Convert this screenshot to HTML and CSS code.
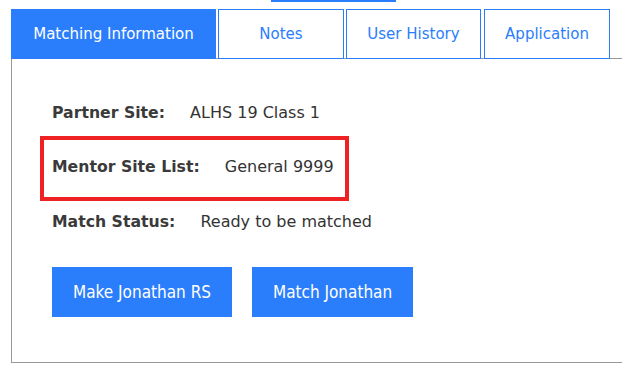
FILE: index.html
```html
<!DOCTYPE html>
<html lang="en">
<head>
    <meta charset="UTF-8">
    <meta name="viewport" content="width=device-width, initial-scale=1.0">
    <title>Match</title>
    <link rel="stylesheet" href="styles.css">
</head>
<body>

    <div class="top-bar"></div>

    <ul class="tabs">
        <li class="tab tab-match active">Matching Information</li>
        <li class="tab tab-notes">Notes</li>
        <li class="tab tab-history">User History</li>
        <li class="tab tab-app">Application</li>
    </ul>

    <section class="panel">
        <div class="info-row">
            <strong>Partner Site:</strong>
            <span class="value">ALHS 19 Class 1</span>
        </div>

        <div class="info-row highlight">
            <strong>Mentor Site List:</strong>
            <span class="value">General 9999</span>
        </div>

        <div class="info-row">
            <strong>Match Status:</strong>
            <span class="value">Ready to be matched</span>
        </div>

        <div class="actions">
            <button class="btn">Make Jonathan RS</button>
            <button class="btn">Match Jonathan</button>
        </div>
    </section>

</body>
</html>
```

FILE: styles.css
```css
/* Basic Styling */
body {
    font-family: "DejaVu Sans", Verdana, sans-serif;
    margin: 0;
    padding: 0;
    background-color: #fff;
    color: #333;
    width: 640px;
    overflow: hidden;
}

.top-bar {
    height: 2px;
    width: 125px;
    margin-left: 271px;
    background-color: #2a7efc;
}

/* Tabs */
.tabs {
    list-style: none;
    display: flex;
    margin: 7px 0 -1px 11px;
    padding: 0;
    position: relative;
}

.tab {
    height: 48px;
    line-height: 48px;
    text-align: center;
    font-size: 15px;
    color: #2a7efc;
    border: 1px solid #2a7efc;
    background: #fff;
    margin-right: 2px;
}

.tab.active {
    background-color: #2a7efc;
    color: white;
}

.tab-match { width: 203px; }
.tab-notes { width: 124px; }
.tab-history { width: 133px; margin-right: 3px; }
.tab-app { width: 124px; }

/* Panel */
.panel {
    margin-left: 11px;
    border: 1px solid #999;
    padding: 44px 0 45px 40px;
}

.info-row {
    font-size: 16px;
    line-height: 20px;
}

.info-row strong {
    font-size: 15.7px;
    color: #3a3a3a;
}

.info-row .value {
    margin-left: 20px;
}

.highlight {
    display: inline-block;
    border: 4px solid #ee2222;
    padding: 17px 11px 20px 8px;
    margin: 13px 0 11px -12px;
}

.actions {
    display: flex;
    gap: 20px;
    margin-top: 35px;
}

.btn {
    font-family: "DejaVu Sans Condensed", Tahoma, sans-serif;
    font-size: 17px;
    height: 50px;
    padding: 0 21px;
    border: none;
    background-color: #2a7efc;
    color: white;
    cursor: pointer;
}
```
